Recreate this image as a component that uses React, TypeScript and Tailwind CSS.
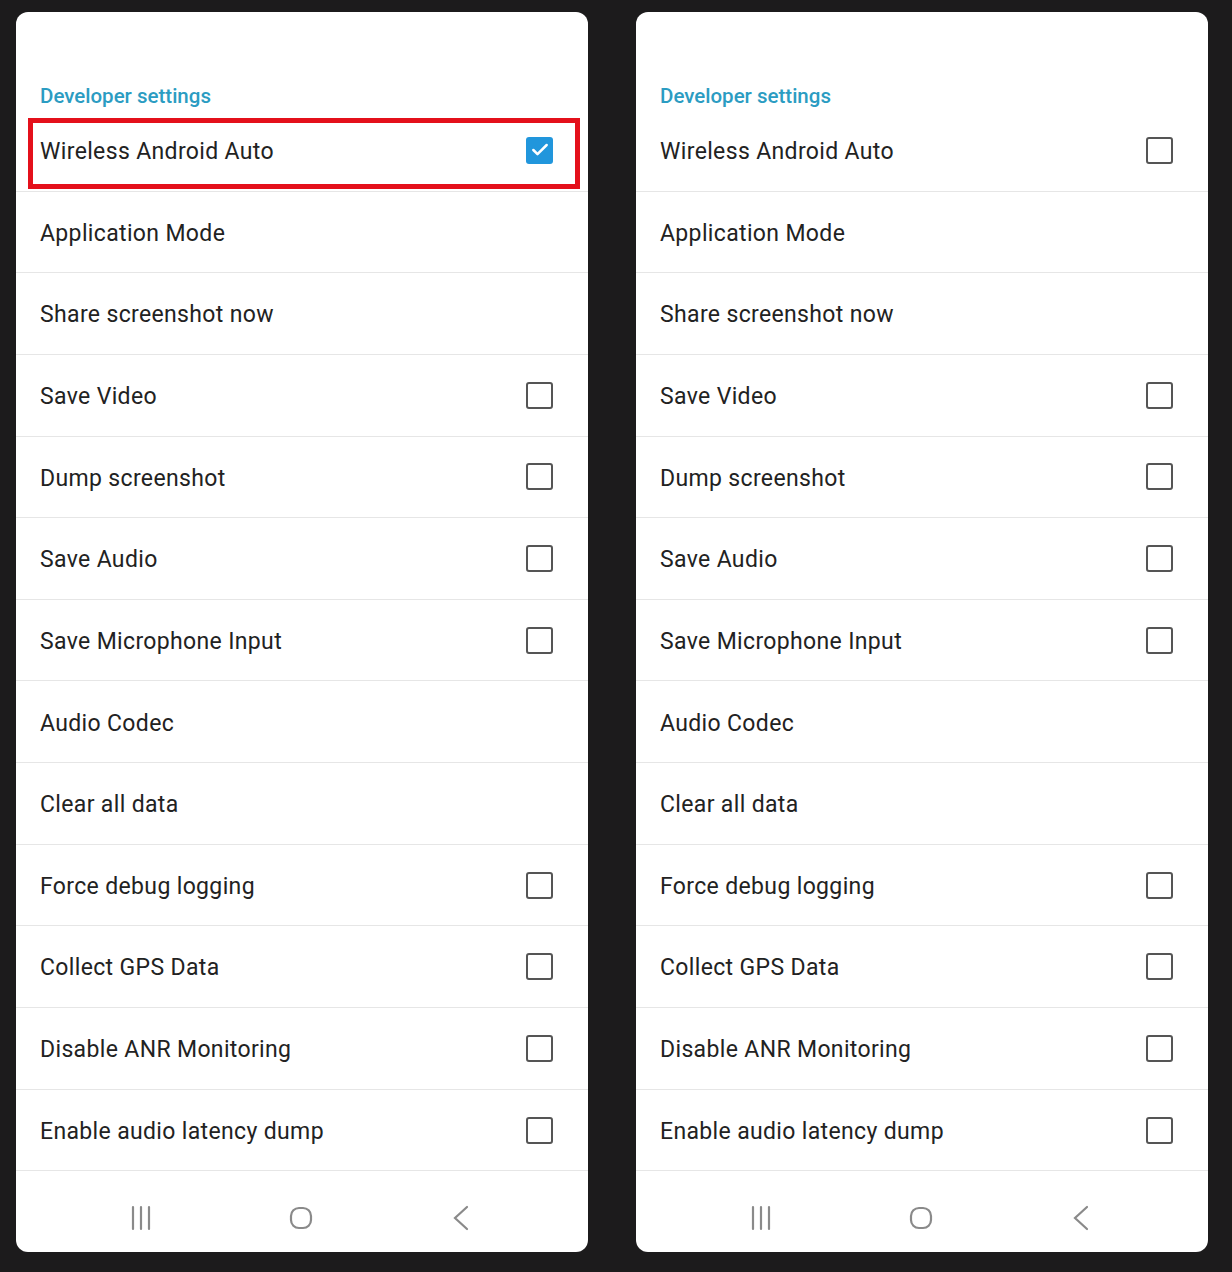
import { Check } from 'lucide-react';

type Item = { label: string; checkbox: boolean };

const items: Item[] = [
  { label: 'Wireless Android Auto', checkbox: true },
  { label: 'Application Mode', checkbox: false },
  { label: 'Share screenshot now', checkbox: false },
  { label: 'Save Video', checkbox: true },
  { label: 'Dump screenshot', checkbox: true },
  { label: 'Save Audio', checkbox: true },
  { label: 'Save Microphone Input', checkbox: true },
  { label: 'Audio Codec', checkbox: false },
  { label: 'Clear all data', checkbox: false },
  { label: 'Force debug logging', checkbox: true },
  { label: 'Collect GPS Data', checkbox: true },
  { label: 'Disable ANR Monitoring', checkbox: true },
  { label: 'Enable audio latency dump', checkbox: true },
];

function Box({ checked }: { checked: boolean }) {
  if (checked) {
    return (
      <div className="w-[27px] h-[27px] rounded-[3px] bg-[#2196dc] flex items-center justify-center">
        <Check className="w-[20px] h-[20px] text-white" strokeWidth={3} />
      </div>
    );
  }
  return <div className="w-[27px] h-[27px] rounded-[3px] border-[2.5px] border-[#555555]" />;
}

function Phone({ highlight }: { highlight: boolean }) {
  return (
    <div className="w-[572px] h-[1240px] bg-white rounded-[12px] overflow-hidden flex flex-col font-['Roboto',sans-serif]">
      <div className="h-[98px] flex items-end px-[24px] pb-[4px]">
        <span className="text-[20.5px] font-medium text-[#2b9cc2] leading-none">Developer settings</span>
      </div>
      {items.map((it, i) => (
        <div
          key={it.label}
          className="h-[81.65px] border-b border-[#e6e6e6] flex items-center relative pl-[24px] pr-[35px]"
        >
          {highlight && i === 0 && (
            <div className="absolute left-[12px] right-[8px] top-[8px] bottom-[2px] border-[5px] border-[#e4101b]" />
          )}
          <span className="flex-1 text-[23px] text-[#222222] tracking-[0.35px] pt-[4px]">{it.label}</span>
          {it.checkbox && <Box checked={highlight && i === 0} />}
        </div>
      ))}
      <div className="flex-1 flex items-center gap-[120px] pl-[105px] pt-[12px] text-[#8a8a8a]">
        <div className="w-[40px] flex justify-center">
          <svg width="22" height="26" viewBox="0 0 22 26" fill="none" stroke="currentColor" strokeWidth="2.2" strokeLinecap="round">
            <line x1="3" y1="2" x2="3" y2="24" />
            <line x1="11" y1="2" x2="11" y2="24" />
            <line x1="19" y1="2" x2="19" y2="24" />
          </svg>
        </div>
        <div className="w-[40px] flex justify-center">
          <svg width="24" height="24" viewBox="0 0 24 24" fill="none" stroke="currentColor" strokeWidth="2.2">
            <rect x="2" y="2" width="20" height="20" rx="8" />
          </svg>
        </div>
        <div className="w-[40px] flex justify-center">
          <svg width="20" height="28" viewBox="0 0 20 28" fill="none" stroke="currentColor" strokeWidth="2.2" strokeLinecap="round">
            <polyline points="16,3 4,14 16,25" />
          </svg>
        </div>
      </div>
    </div>
  );
}

export default function App() {
  return (
    <div className="w-[1232px] h-[1272px] bg-[#1c1b1c] flex gap-[48px] pl-[16px] pt-[12px]">
      <Phone highlight />
      <Phone highlight={false} />
    </div>
  );
}
